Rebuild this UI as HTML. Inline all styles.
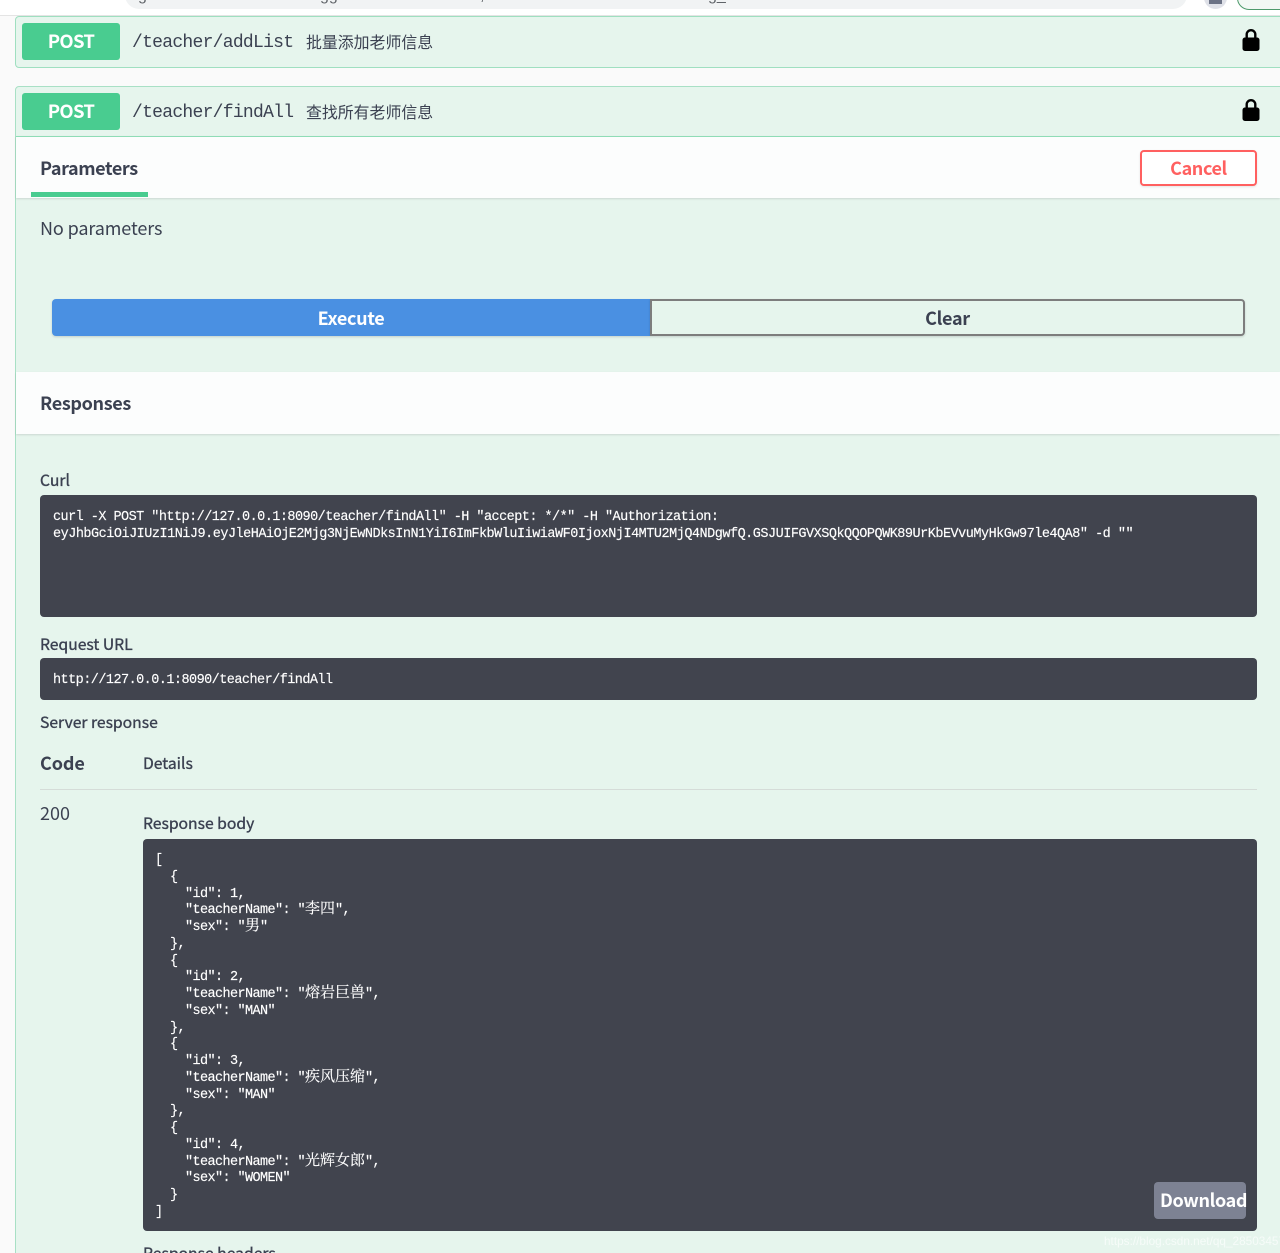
<!DOCTYPE html>
<html lang="zh"><head><meta charset="utf-8"><title>Swagger UI</title>
<style>
html,body{margin:0;padding:0;background:#fafafa;width:1280px;height:1253px;overflow:hidden}
#w{position:absolute;left:0;top:0;width:1280px;height:1253px;overflow:hidden;font-family:"Noto Sans CJK SC","Liberation Sans",sans-serif;color:#3b4151;background:#fafafa}
.a{position:absolute}
.t{position:absolute;white-space:nowrap;line-height:20px}
.b{font-weight:700}
.m{font-weight:400;-webkit-text-stroke:.35px #3b4151;font-size:15.7px}
.post{position:absolute;left:22px;width:98px;height:37px;background:#49cc90;border-radius:3px;color:#fff;font-weight:700;font-size:18.5px;line-height:37px;text-align:center;letter-spacing:-.7px}
.path{position:absolute;left:132px;white-space:nowrap;font:18px/20px "Liberation Mono",monospace;letter-spacing:-.72px;color:#3b4151}
.desc{position:absolute;left:306px;white-space:nowrap;font:15.9px/20px "Noto Sans CJK SC",sans-serif;color:#3b4151}
.dark{position:absolute;background:#41444e;border-radius:4px}
pre{position:absolute;margin:0;font:13.5px/16.75px "Liberation Mono",monospace;letter-spacing:-.6px;color:#fff;white-space:pre;font-weight:400;-webkit-text-stroke:.15px #fff}
pre span{font:15px/0 "Noto Serif CJK SC",serif;letter-spacing:0}
.frag{position:absolute;font:16px/16px "Liberation Sans",sans-serif;color:#5f6368;white-space:nowrap}
</style></head><body><div id="w">

<div class="a" style="left:0;top:0;width:1280px;height:15px;background:#fff;border-bottom:1px solid #e4e4e4"></div>
<div class="a" style="left:125px;top:-20px;width:1062px;height:29px;background:#f1f3f4;border-radius:14px"></div>
<div class="frag" style="left:320px;top:-12px">gg</div>
<div class="frag" style="left:138px;top:-12px">g</div>
<div class="frag" style="left:480px;top:-12px">,</div>
<div class="frag" style="left:708px;top:-12px">g_</div>
<div class="a" style="left:1204px;top:-14px;width:23px;height:23px;background:#dfe1e8;border-radius:50%"></div>
<div class="a" style="left:1209px;top:0;width:13px;height:4px;background:#6b7285"></div>
<div class="a" style="left:1237px;top:-14px;width:60px;height:22px;background:#f2f8f4;border:1px solid #4e9a6c;border-radius:12px"></div>

<div class="a" style="left:15px;top:16px;width:1290px;height:50px;background:#e6f5ed;border:1px solid #9fdfc0;border-radius:4px"></div>
<div class="post" style="top:23px">POST</div>
<div class="path" style="top:33px">/teacher/addList</div>
<div class="desc" style="top:32px">批量添加老师信息</div>
<svg class="a" style="left:1242px;top:28px" width="18" height="24" viewBox="0 0 18 24"><path d="M3.5 10V6.5a5.5 5.5 0 0 1 11 0V10h-2.4V6.5a3.1 3.1 0 0 0-6.2 0V10z" fill="#000"/><rect x="0.5" y="9.5" width="17" height="13.5" rx="2.5" fill="#000"/></svg>

<div class="a" style="left:15px;top:86px;width:1290px;height:1200px;background:#e6f5ed;border:1px solid #a8e0c5;border-radius:4px"></div>
<div class="post" style="top:93px">POST</div>
<div class="path" style="top:103px">/teacher/findAll</div>
<div class="desc" style="top:102px">查找所有老师信息</div>
<svg class="a" style="left:1242px;top:98px" width="18" height="24" viewBox="0 0 18 24"><path d="M3.5 10V6.5a5.5 5.5 0 0 1 11 0V10h-2.4V6.5a3.1 3.1 0 0 0-6.2 0V10z" fill="#000"/><rect x="0.5" y="9.5" width="17" height="13.5" rx="2.5" fill="#000"/></svg>

<div class="a" style="left:16px;top:136px;width:1264px;height:62px;background:#fcfdfd;border-top:1px solid #8fdcb6;box-shadow:0 1px 2px rgba(0,0,0,.12);box-sizing:border-box"></div>
<div class="t b" style="left:40px;top:158px;font-size:18px;letter-spacing:-.4px">Parameters</div>
<div class="a" style="left:31px;top:192px;width:117px;height:5px;background:#49cc90"></div>
<div class="a" style="left:1140px;top:150px;width:117px;height:36px;box-sizing:border-box;border:2px solid #ff6060;border-radius:4px;background:#fff;color:#ff6060;font-weight:700;font-size:18px;line-height:32px;text-align:center;box-shadow:0 1px 2px rgba(0,0,0,.1);letter-spacing:-.4px">Cancel</div>

<div class="t" style="left:40px;top:218px;font-size:18px;letter-spacing:-.12px">No parameters</div>

<div class="a" style="left:52px;top:299px;width:598px;height:37px;background:#4a90e2;border-radius:4px 0 0 4px;color:#fff;font-weight:700;font-size:18px;line-height:39px;text-align:center;box-shadow:0 1px 2px rgba(0,0,0,.15);letter-spacing:-.3px">Execute</div>
<div class="a" style="left:650px;top:299px;width:595px;height:37px;box-sizing:border-box;border:2px solid #7d7d7d;border-radius:0 4px 4px 0;color:#3b4151;font-weight:700;font-size:18px;line-height:34px;text-align:center;box-shadow:0 1px 2px rgba(0,0,0,.15);letter-spacing:-.3px">Clear</div>

<div class="a" style="left:16px;top:372px;width:1264px;height:62px;background:#fcfdfd;box-shadow:0 1px 2px rgba(0,0,0,.12)"></div>
<div class="t b" style="left:40px;top:393px;font-size:18px;letter-spacing:-.35px">Responses</div>

<div class="t m" style="left:40px;top:470px">Curl</div>
<div class="dark" style="left:40px;top:495px;width:1217px;height:122px"></div>
<pre style="left:53px;top:510px;letter-spacing:-.54px">curl -X POST "http://127.0.0.1:8090/teacher/findAll" -H "accept: */*" -H "Authorization:</pre>
<pre style="left:53px;top:527px;letter-spacing:-.495px">eyJhbGciOiJIUzI1NiJ9.eyJleHAiOjE2Mjg3NjEwNDksInN1YiI6ImFkbWluIiwiaWF0IjoxNjI4MTU2MjQ4NDgwfQ.GSJUIFGVXSQkQQOPQWK89UrKbEVvuMyHkGw97le4QA8" -d ""</pre>

<div class="t m" style="left:40px;top:634px">Request URL</div>
<div class="dark" style="left:40px;top:658px;width:1217px;height:42px"></div>
<pre style="left:53px;top:673px;letter-spacing:-.545px">http://127.0.0.1:8090/teacher/findAll</pre>

<div class="t m" style="left:40px;top:712px">Server response</div>
<div class="t b" style="left:40px;top:753px;font-size:18px;letter-spacing:-.1px">Code</div>
<div class="t m" style="left:143px;top:753px">Details</div>
<div class="a" style="left:40px;top:789px;width:1217px;height:1px;background:#d5dcd8"></div>
<div class="t" style="left:40px;top:803px;font-size:18px">200</div>
<div class="t m" style="left:143px;top:813px">Response body</div>

<div class="dark" style="left:143px;top:839px;width:1114px;height:392px"></div>
<pre style="left:155px;top:853px">[
  {
    "id": 1,
    "teacherName": "<span>李四</span>",
    "sex": "<span>男</span>"
  },
  {
    "id": 2,
    "teacherName": "<span>熔岩巨兽</span>",
    "sex": "MAN"
  },
  {
    "id": 3,
    "teacherName": "<span>疾风压缩</span>",
    "sex": "MAN"
  },
  {
    "id": 4,
    "teacherName": "<span>光辉女郎</span>",
    "sex": "WOMEN"
  }
]</pre>
<div class="a" style="left:1154px;top:1182px;width:92px;height:37px;background:#7d8293;border-radius:4px"></div>
<div class="t b" style="left:1160px;top:1190px;font-size:18px;color:#fff;letter-spacing:-.35px">Download</div>

<div class="t m" style="left:143px;top:1243px">Response headers</div>
<div class="t" style="left:1104px;top:1231px;font:11.8px/20px 'Liberation Sans',sans-serif;color:rgba(255,255,255,.65)">https://blog.csdn.net/qq_28503457</div>

</div></body></html>
